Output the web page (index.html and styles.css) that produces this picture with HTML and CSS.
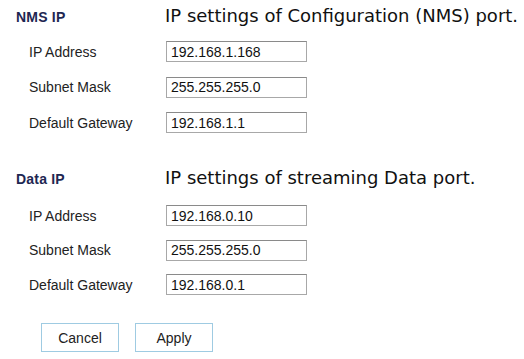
FILE: index.html
```html
<!DOCTYPE html>
<html>
<head>
<meta charset="utf-8">
<link rel="stylesheet" href="styles.css">
</head>
<body>
<form class="page">
  <section class="group group-nms">
    <div class="group-head">
      <h2 class="group-title">NMS IP</h2>
      <p class="group-note">IP settings of Configuration (NMS) port.</p>
    </div>
    <div class="rows">
      <label class="row"><span class="row-label">IP Address</span><input class="field" type="text" value="192.168.1.168"></label>
      <label class="row"><span class="row-label">Subnet Mask</span><input class="field" type="text" value="255.255.255.0"></label>
      <label class="row"><span class="row-label">Default Gateway</span><input class="field" type="text" value="192.168.1.1"></label>
    </div>
  </section>
  <section class="group group-data">
    <div class="group-head">
      <h2 class="group-title">Data IP</h2>
      <p class="group-note">IP settings of streaming Data port.</p>
    </div>
    <div class="rows">
      <label class="row"><span class="row-label">IP Address</span><input class="field" type="text" value="192.168.0.10"></label>
      <label class="row"><span class="row-label">Subnet Mask</span><input class="field" type="text" value="255.255.255.0"></label>
      <label class="row"><span class="row-label">Default Gateway</span><input class="field" type="text" value="192.168.0.1"></label>
    </div>
  </section>
  <div class="actions">
    <button class="btn" type="button">Cancel</button>
    <button class="btn" type="button">Apply</button>
  </div>
</form>
</body>
</html>
```
FILE: styles.css
```css
html, body {
  margin: 0;
  padding: 0;
  background: #ffffff;
}
body {
  width: 524px;
  height: 359px;
  overflow: hidden;
  font-family: "Liberation Sans", Arial, sans-serif;
  color: #222222;
}
.page {
  display: flex;
  flex-direction: column;
  padding: 5px 0 0 16px;
}
.group-head {
  display: flex;
  align-items: baseline;
  height: 22px;
}
.group-title {
  margin: 0;
  width: 149px;
  flex: none;
  font-family: "Liberation Sans", Arial, sans-serif;
  font-weight: bold;
  font-size: 14px;
  letter-spacing: 0.2px;
  line-height: 22px;
  color: #1e2752;
}
.group-note {
  margin: 0;
  font-family: "DejaVu Sans", sans-serif;
  font-size: 18px;
  line-height: 22px;
  color: #111111;
}
.rows {
  display: flex;
  flex-direction: column;
  gap: 14.5px;
  margin-top: 14px;
}
.group-data {
  margin-top: 34px;
}
.group-data .rows {
  margin-top: 16px;
  gap: 13.5px;
}
.row {
  display: flex;
  align-items: center;
  height: 21px;
}
.row-label {
  width: 137px;
  padding-left: 13px;
  flex: none;
  font-size: 14px;
  color: #222222;
}
.field {
  box-sizing: border-box;
  width: 141px;
  height: 21px;
  margin: 0;
  padding: 0 4px;
  border: 1px solid #a8a8a8;
  border-top-color: #8a8a8a;
  font-family: "Liberation Sans", Arial, sans-serif;
  font-size: 14px;
  color: #111111;
  background: #ffffff;
  outline: none;
}
.actions {
  display: flex;
  gap: 16px;
  margin-top: 28px;
  padding-left: 25px;
}
.btn {
  box-sizing: border-box;
  width: 78px;
  height: 29px;
  margin: 0;
  padding: 0;
  border: 1px solid #9fcbe2;
  background: #ffffff;
  font-family: "Liberation Sans", Arial, sans-serif;
  font-size: 14px;
  color: #222222;
}
```
